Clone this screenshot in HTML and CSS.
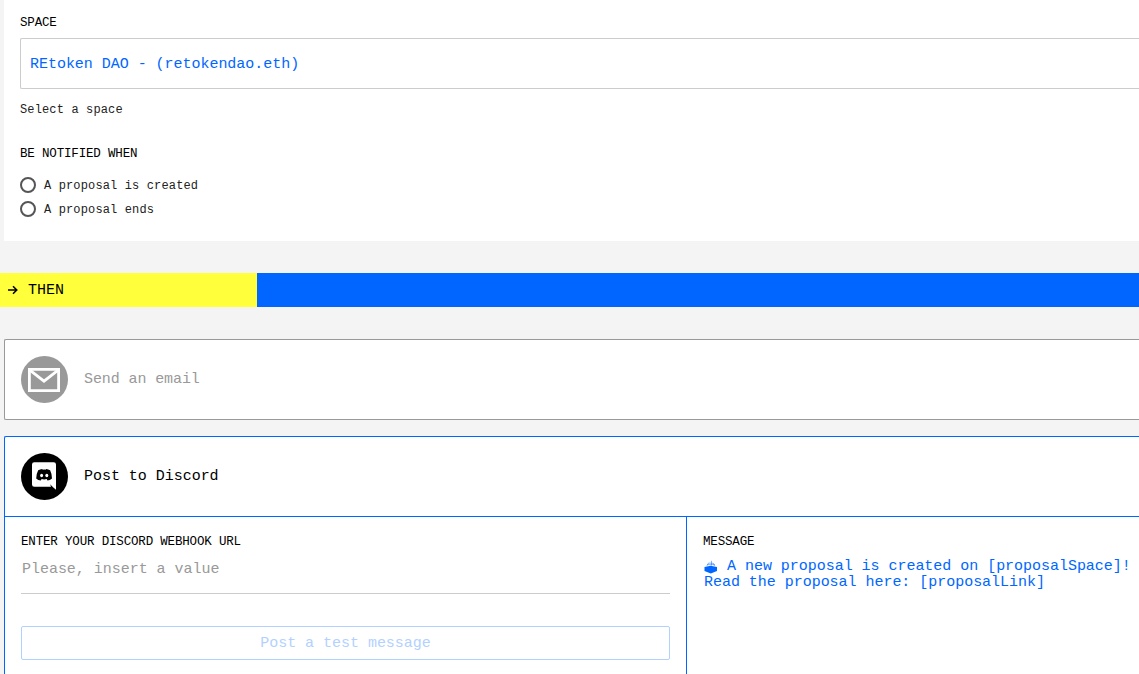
FILE: index.html
```html
<!DOCTYPE html>
<html lang="en">
<head>
<meta charset="utf-8">
<title>Create a recipe</title>
<link rel="stylesheet" href="styles.css">
</head>
<body>
<section class="trigger">
  <div class="label">SPACE</div>
  <div class="select">REtoken DAO - (retokendao.eth)</div>
  <div class="small hint">Select a space</div>
  <div class="label notify">BE NOTIFIED WHEN</div>
  <div class="small option"><span class="radio"></span><span class="option-text">A proposal is created</span></div>
  <div class="small option"><span class="radio"></span><span class="option-text">A proposal ends</span></div>
</section>
<div class="then-bar">
  <div class="then">
    <svg class="arrow" width="10" height="10" viewBox="0 0 10 10"><path d="M0 5H9M5 1.2L8.8 5L5 8.8" fill="none" stroke="#000" stroke-width="1.5"/></svg>
    <span class="then-text">THEN</span>
  </div>
</div>
<section class="card email">
  <div class="card-head">
    <svg width="47" height="47" viewBox="0 0 47 47"><circle cx="23.5" cy="23.5" r="23.5" fill="#999"/><g fill="none" stroke="#fff" stroke-width="2.8"><path d="M8.4 13.4H37.6V34.6H8.4Z"/><path d="M8.5 13.8L23 25.2L37.5 13.8"/></g></svg>
    <span class="email-text">Send an email</span>
  </div>
</section>
<section class="card discord">
  <div class="card-head">
    <svg width="47" height="47" viewBox="0 0 47 47"><circle cx="23.5" cy="23.5" r="23.5" fill="#000"/><path d="M13.3 9.2H32.7Q35 9.2 35 11.5V36.7L31.8 34L29.2 31.2L30 33.8H13.3Q11 33.8 11 31.5V11.5Q11 9.2 13.3 9.2Z" fill="#fff"/><path d="M17.2 17.2Q19 16 21.3 15.9L21.7 16.7Q23.2 16.4 24.6 16.7L25 15.9Q27.3 16 29.1 17.2Q31.2 21.5 31 25.4Q29 27.3 26.5 27.4L25.7 26.1Q23.2 26.8 20.6 26.1L19.8 27.4Q17 27.3 15.2 25.4Q15.1 21.2 17.2 17.2Z" fill="#000"/><ellipse cx="20.6" cy="22.5" rx="1.5" ry="1.7" fill="#fff"/><ellipse cx="25.8" cy="22.5" rx="1.5" ry="1.7" fill="#fff"/></svg>
    <span>Post to Discord</span>
  </div>
  <div class="columns">
    <div class="webhook">
      <div class="label">ENTER YOUR DISCORD WEBHOOK URL</div>
      <div class="input">Please, insert a value</div>
      <div class="button">Post a test message</div>
    </div>
    <div class="message">
      <div class="label">MESSAGE</div>
      <div class="template">
        <div class="line"><svg class="ballot" width="14" height="14" viewBox="0 0 14 14"><path d="M.5 7L6.5 5.8L13 7V11L6.8 13.4L.5 11Z" fill="#06f"/><path d="M3 5.8L4.5 3L9.5 3.4L10.5 6M7.5 .8V5.5M3 4.6H11" fill="none" stroke="#06f" stroke-width=".8" opacity=".6"/></svg>A new proposal is created on [proposalSpace]!</div>
        <div class="line">Read the proposal here: [proposalLink]</div>
      </div>
    </div>
  </div>
</section>
</body>
</html>
```
FILE: styles.css
```css
* { box-sizing: border-box; }
body {
  margin: 0;
  height: 674px;
  overflow: hidden;
  background: #f4f4f4;
  color: #000;
  font: 15px/16px "Liberation Mono", monospace;
  letter-spacing: -0.03px;
  white-space: pre;
  display: flex;
  flex-direction: column;
}
.trigger, .card, .card-head, .columns, .then-bar, .webhook, .message, .template {
  display: flex;
}
.trigger {
  flex: none;
  flex-direction: column;
  height: 241px;
  margin-left: 4px;
  padding: 15px 0 0 16px;
  background: #fff;
}
.label { font-size: 12.5px; line-height: 16px; letter-spacing: -0.17px; }
.small { font-size: 12px; line-height: 16px; letter-spacing: 0.14px; color: #222; }
.select {
  height: 51px;
  margin-top: 7px;
  padding-left: 9px;
  border: 1px solid #ccc;
  border-right: 0;
  border-radius: 2px 0 0 2px;
  color: #06f;
  line-height: 51px;
}
.hint { margin-top: 13px; }
.notify { margin: 28px 0 11px; }
.option { display: flex; align-items: center; gap: 8px; height: 16px; margin: 4px 0; }
.option-text { padding-top: 2px; }
.radio { width: 16px; height: 16px; border: 2px solid #555; border-radius: 50%; }
.then-bar { flex: none; height: 34px; margin: 32px 0; background: #06f; }
.then { display: flex; align-items: center; gap: 10px; width: 257px; padding-left: 8px; background: #ffff3c; }
.arrow { margin-bottom: 1px; }
.then-text { padding-top: 2px; }
.card {
  flex: none;
  flex-direction: column;
  margin-left: 4px;
  border: 1px solid #999;
  border-right: 0;
  border-radius: 2px 0 0 2px;
  background: #fff;
}
.card-head { align-items: center; gap: 16px; height: 79px; padding-left: 16px; }
.email { color: #999; }
.email-text { letter-spacing: -0.1px; padding-top: 1px; }
.discord { height: 260px; margin-top: 16px; border-color: #06f; }
.columns { flex: 1; border-top: 1px solid #06f; }
.webhook { flex-direction: column; width: 682px; padding: 17px 16px 0; border-right: 1px solid #06f; }
.input { height: 44px; padding: 12px 0 0 1px; border-bottom: 1px solid #ccc; color: #999; }
.button { height: 34px; margin-top: 32px; border: 1px solid #b2d1ff; border-radius: 2px; color: #b2d1ff; text-align: center; line-height: 33px; }
.message { flex: 1; flex-direction: column; padding: 17px 0 0 16px; }
.template { flex-direction: column; margin-top: 9px; padding-left: 1px; color: #06f; }
.line { display: flex; align-items: center; height: 16px; }
.ballot { margin-right: 9px; }
```
